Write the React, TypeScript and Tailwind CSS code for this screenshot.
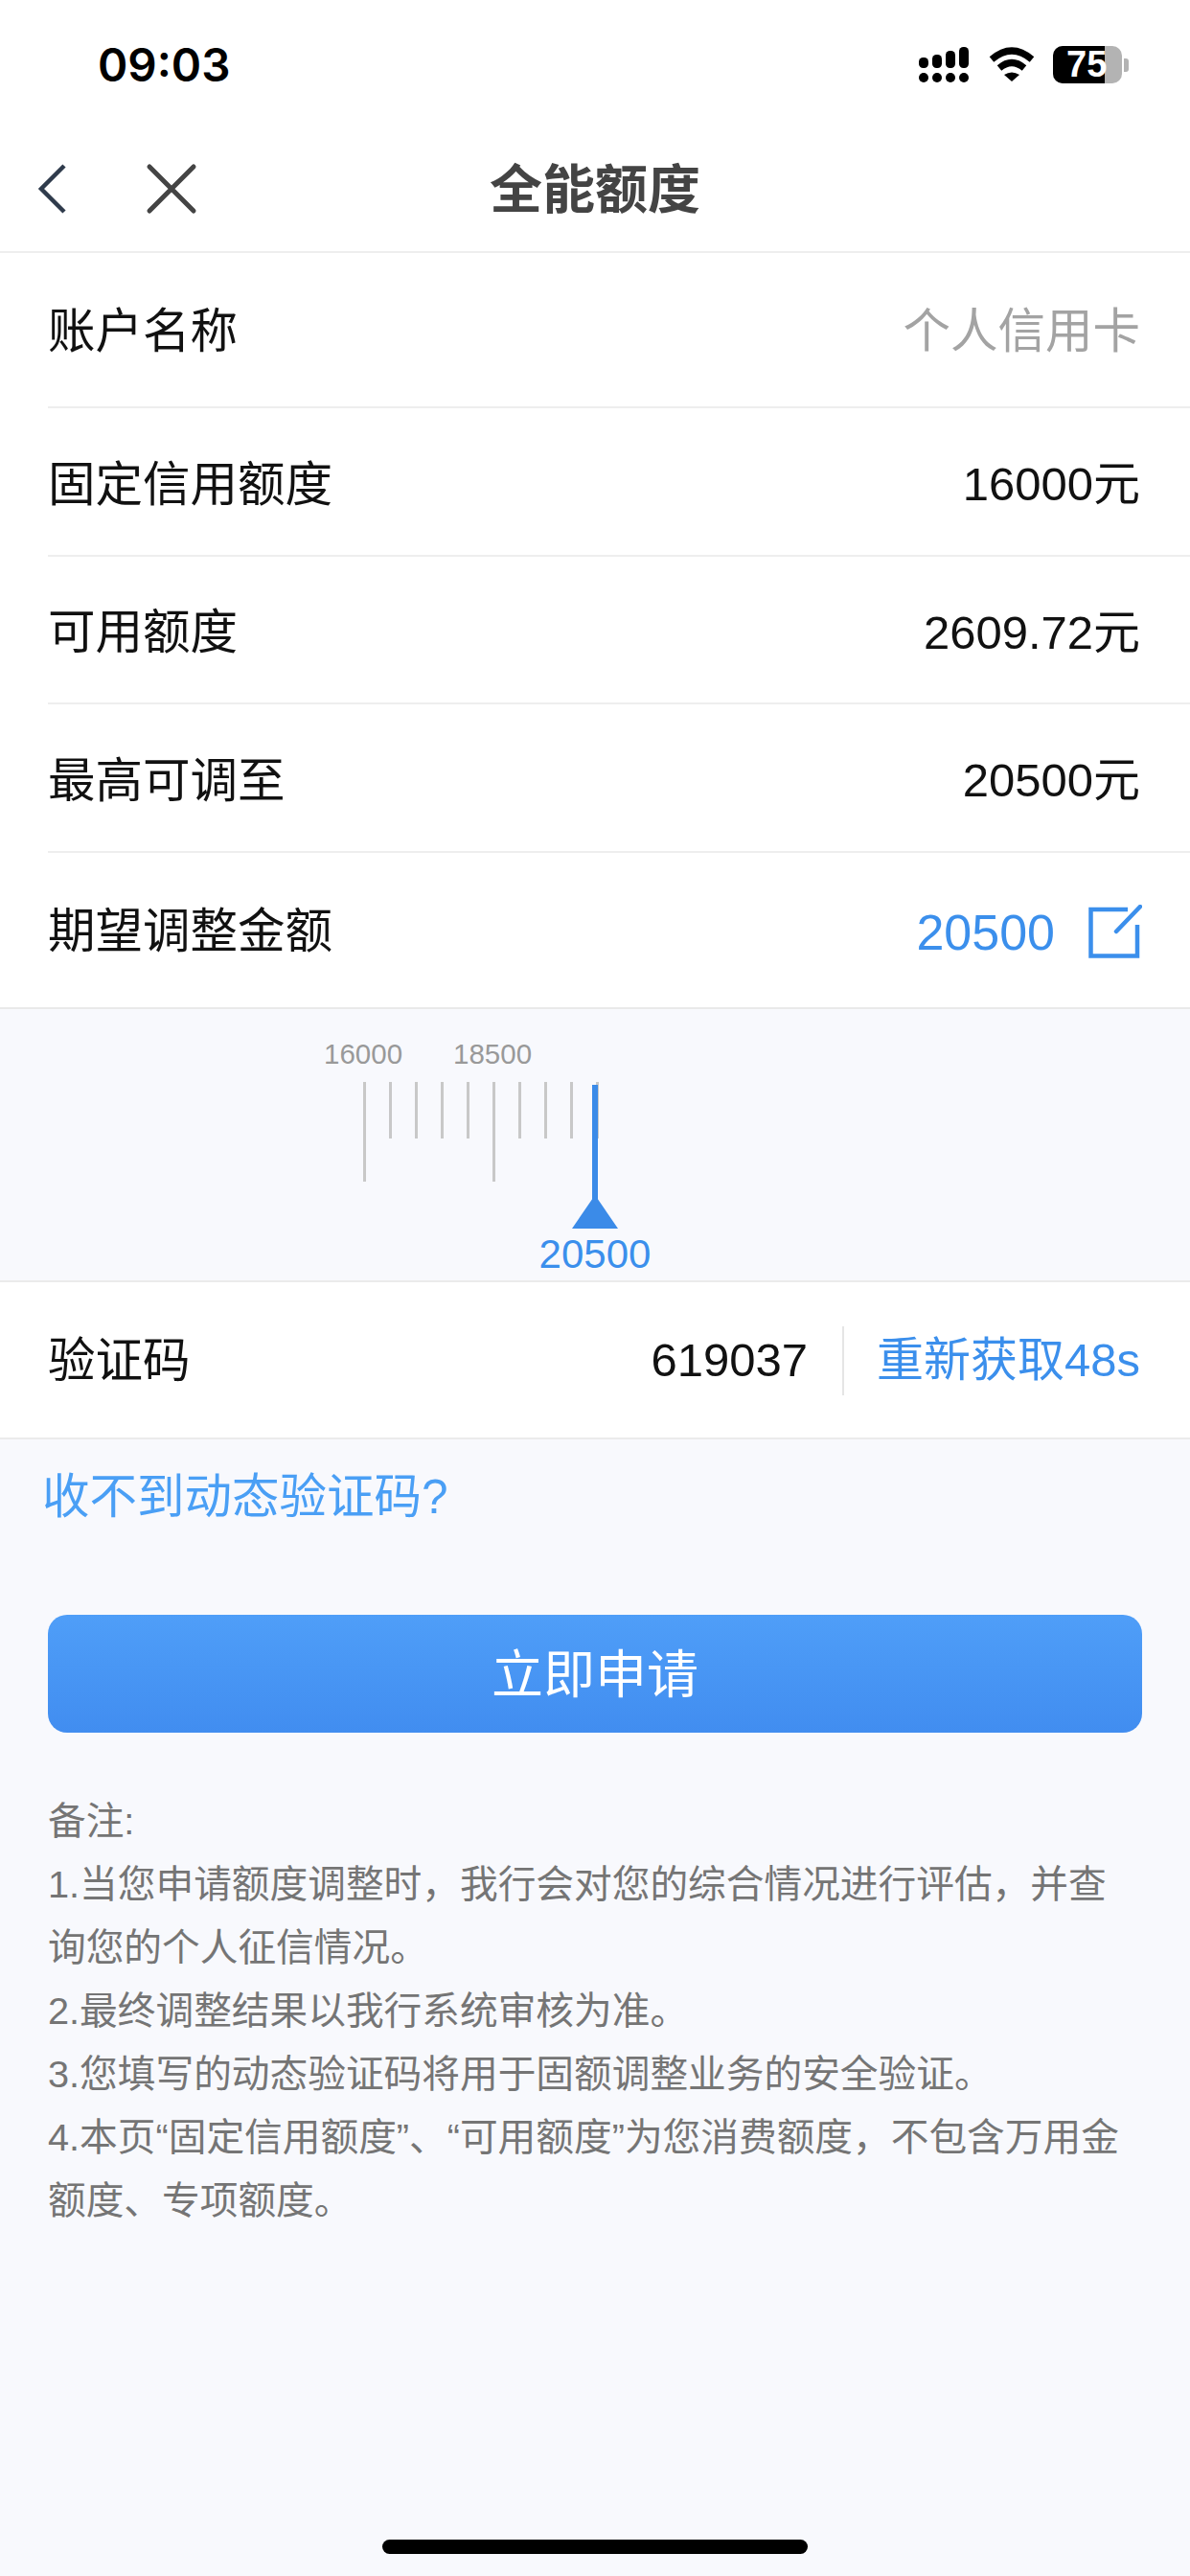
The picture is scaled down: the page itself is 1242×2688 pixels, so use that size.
const sans = "font-['Liberation_Sans','Noto_Sans_CJK_SC',sans-serif]";

function Row({ label, children, h }: { label: string; children: React.ReactNode; h: string }) {
  return (
    <div className={`flex items-center justify-between pr-[52px] ${h}`}>
      <span className="text-[49.5px] text-[#111]">{label}</span>
      {children}
    </div>
  );
}

const Val = ({ children }: { children: React.ReactNode }) => (
  <span className="text-[49px] text-[#111]">{children}</span>
);

const ticks = [1, 0, 0, 0, 0, 1, 0, 0, 0, 0];

export default function App() {
  return (
    <div className={`${sans} w-[1242px] h-[2688px] bg-[#f8f9fd] flex flex-col overflow-hidden relative`}>
      {/* status bar */}
      <div className="bg-white h-[134px] flex items-start justify-between pl-[102px] pr-[64px] pt-[38px]">
        <span className="font-['Inter',sans-serif] pt-[2px] text-[47.5px] leading-[56px] font-semibold text-black">09:03</span>
        <div className="flex items-center pt-[10px]">
          <svg width="52" height="38" viewBox="0 0 52 38" className="mr-[21px]">
            <g fill="#000">
              <rect x="0" y="11" width="10" height="11" rx="4.5" />
              <rect x="14" y="8" width="10" height="14" rx="4.5" />
              <rect x="28" y="4" width="10" height="18" rx="4.5" />
              <rect x="42" y="0" width="10" height="22" rx="4.5" />
              <circle cx="5" cy="32" r="5" />
              <circle cx="19" cy="32" r="5" />
              <circle cx="33" cy="32" r="5" />
              <circle cx="47" cy="32" r="5" />
            </g>
          </svg>
          <svg width="48" height="38" viewBox="0 0 48 38" className="mr-[19px]">
            <path d="M3 13Q24 -5 45 13" stroke="#000" strokeWidth="7" fill="none" />
            <path d="M11 22Q24 11 37 22" stroke="#000" strokeWidth="7" fill="none" />
            <path d="M16 29Q24 24 32 29L24 36Z" fill="#000" />
          </svg>
          <div className="flex items-center">
            <div className="relative w-[72px] h-[39px] rounded-[10px] bg-[#b3b3b3] flex items-center">
              <div className="absolute left-0 top-0 bottom-0 w-[54px] rounded-l-[10px] bg-black" />
              <span className="relative pl-[14px] text-[38px] leading-[39px] font-bold text-white">75</span>
            </div>
            <div className="w-[5px] h-[14px] ml-[2px] rounded-r-[3px] bg-[#b3b3b3]" />
          </div>
        </div>
      </div>

      {/* nav */}
      <div className="relative bg-white h-[130px] border-b-2 border-[#eeeeee] flex items-center justify-center">
        <div className="absolute left-[38px] top-[36px] flex items-center gap-[79px]">
          <svg width="34" height="54" viewBox="0 0 34 54">
            <path d="M29 3L5 27L29 51" fill="none" stroke="#2f3b4c" strokeWidth="4.5" />
          </svg>
          <svg width="56" height="54" viewBox="0 0 56 54">
            <path d="M5 4L51 50M51 4L5 50" fill="none" stroke="#444" strokeWidth="5" strokeLinecap="round" />
          </svg>
        </div>
        <span className="text-[55px] font-bold text-[#444]">全能额度</span>
      </div>

      {/* rows */}
      <div className="bg-white pl-[50px] border-b-2 border-[#e9e9e9]">
        <div className="border-b-2 border-[#eeeeee] pt-[4px]">
          <Row label="账户名称" h="h-[156px]">
            <span className="text-[49.5px] text-[#a3a3a3]">个人信用卡</span>
          </Row>
        </div>
        <div className="border-b-2 border-[#eeeeee] pt-[7px]">
          <Row label="固定信用额度" h="h-[146px]"><Val>16000元</Val></Row>
        </div>
        <div className="border-b-2 border-[#eeeeee] pt-[7px]">
          <Row label="可用额度" h="h-[145px]"><Val>2609.72元</Val></Row>
        </div>
        <div className="border-b-2 border-[#eeeeee] pt-[7px]">
          <Row label="最高可调至" h="h-[146px]"><Val>20500元</Val></Row>
        </div>
        <div className="pt-[4px]">
          <Row label="期望调整金额" h="h-[157px]">
            <div className="flex items-center gap-[35px] -mr-[2px]">
              <span className="text-[52px] text-[#3b8fec] pt-[1px]">20500</span>
              <svg width="56" height="56" viewBox="0 0 56 56" className="-mt-[2px]">
                <path d="M41 5H2.5V53.5H51V21" fill="none" stroke="#3b8fec" strokeWidth="4.5" />
                <path d="M29 28L54 2" fill="none" stroke="#3b8fec" strokeWidth="4.5" strokeLinecap="round" />
              </svg>
            </div>
          </Row>
        </div>
      </div>

      {/* ruler */}
      <div className="h-[285px] border-b-2 border-[#ebebeb] pl-[379px] pt-[76px] relative">
        <div className="flex items-start gap-[24px]">
          {ticks.map((t, i) => (
            <div key={i} className={`w-[3px] bg-[#c8c8c8] ${t ? "h-[104px]" : "h-[59px]"}`} />
          ))}
        </div>
        <span className="absolute left-[338px] top-[29px] text-[29.5px] leading-[36px] text-[#999]">16000</span>
        <span className="absolute left-[473px] top-[29px] text-[29.5px] leading-[36px] text-[#999]">18500</span>
        <div className="absolute left-[618px] top-[79px] w-[6px] h-[120px] bg-[#3b8be8]" />
        <div className="absolute left-[597px] top-[194px] w-0 h-0 border-l-[24px] border-r-[24px] border-b-[35px] border-l-transparent border-r-transparent border-b-[#3b8be8]" />
        <span className="absolute left-0 right-0 text-center top-[232px] text-[42px] leading-[48px] text-[#3b8fec]">20500</span>
      </div>

      {/* code */}
      <div className="bg-white h-[164px] border-b-2 border-[#ebebeb] pl-[50px] pr-[52px] pt-[2px] flex items-center justify-between">
        <span className="text-[49.5px] text-[#111]">验证码</span>
        <div className="flex items-center">
          <span className="text-[49px] text-[#111]">619037</span>
          <div className="w-[2px] h-[72px] bg-[#e5e5e5] ml-[36px] mr-[34px]" />
          <span className="text-[49px] text-[#3b8fec]">重新获取48s</span>
        </div>
      </div>

      <div className="pl-[44px] pt-[25px] text-[49.5px] leading-[70px] text-[#4a9ff5]">收不到动态验证码?</div>

      <div className="mx-[50px] mt-[88px] h-[123px] pt-[4px] rounded-[20px] bg-gradient-to-b from-[#4f9ef8] to-[#418df0] flex items-center justify-center text-[54px] text-white">
        立即申请
      </div>

      <div className="mx-[50px] mt-[59px] text-[39.7px] leading-[66px] text-[#757575]">
        <p>备注:</p>
        <p>1.当您申请额度调整时，我行会对您的综合情况进行评估，并查询您的个人征信情况。</p>
        <p>2.最终调整结果以我行系统审核为准。</p>
        <p>3.您填写的动态验证码将用于固额调整业务的安全验证。</p>
        <p>4.本页“固定信用额度”、“可用额度”为您消费额度，不包含万用金额度、专项额度。</p>
      </div>

      <div className="absolute left-[399px] bottom-[23px] w-[444px] h-[15px] rounded-full bg-black" />
    </div>
  );
}
